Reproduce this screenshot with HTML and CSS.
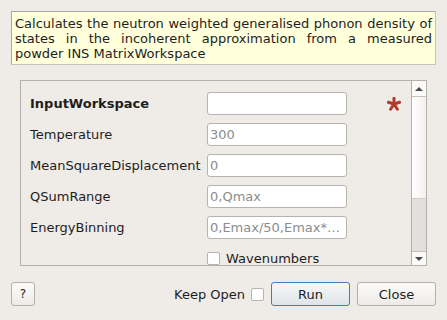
FILE: index.html
```html
<!DOCTYPE html>
<html>
<head>
<meta charset="utf-8">
<link rel="stylesheet" href="styles.css">
</head>
<body>
<div class="dialog">
  <div class="desc">Calculates the neutron weighted generalised phonon density of states in the incoherent approximation from a measured powder INS MatrixWorkspace</div>
  <div class="group">
    <div class="content">
      <div class="grid">
        <div class="label bold">InputWorkspace</div>
        <div class="input"></div>
        <div class="star"><svg width="14" height="14" viewBox="0 0 14 14"><g stroke="#b33a2d" stroke-width="3" stroke-linecap="round"><line x1="7" y1="7" x2="7" y2="1.2"/><line x1="7" y1="7" x2="12.6" y2="5.2"/><line x1="7" y1="7" x2="10.4" y2="12.2"/><line x1="7" y1="7" x2="3.6" y2="12.2"/><line x1="7" y1="7" x2="1.4" y2="5.2"/></g></svg></div>

        <div class="label">Temperature</div>
        <div class="input"><span class="ph">300</span></div>
        <div></div>

        <div class="label">MeanSquareDisplacement</div>
        <div class="input"><span class="ph">0</span></div>
        <div></div>

        <div class="label">QSumRange</div>
        <div class="input"><span class="ph">0,Qmax</span></div>
        <div></div>

        <div class="label">EnergyBinning</div>
        <div class="input"><span class="ph">0,Emax/50,Emax*…</span></div>
        <div></div>

        <div></div>
        <div class="check-row"><span class="cb"></span><span>Wavenumbers</span></div>
        <div></div>
      </div>
    </div>
    <div class="scrollbar">
      <div class="sb-btn sb-up"><span class="tri-up"></span></div>
      <div class="sb-thumb"></div>
      <div class="sb-track"></div>
      <div class="sb-btn sb-down"><span class="tri-down"></span></div>
    </div>
  </div>
  <div class="footer">
    <div class="btn help">?</div>
    <div class="spacer"></div>
    <div class="keep">Keep Open</div>
    <span class="cb keep-cb"></span>
    <div class="btn run">Run</div>
    <div class="btn close">Close</div>
  </div>
</div>
</body>
</html>
```
FILE: styles.css
```css
html, body {
  margin: 0;
  padding: 0;
  background: #efebe7;
}
body {
  font-family: "DejaVu Sans", sans-serif;
  font-size: 13px;
  color: #1e1e1e;
  width: 447px;
  height: 320px;
  overflow: hidden;
}
.dialog {
  padding: 11px 11px 0 11px;
  display: flex;
  flex-direction: column;
}
.desc {
  background: #ffffdc;
  border: 1px solid #c4c2bc;
  border-left-color: #a9a7a2;
  border-top-color: #a9a7a2;
  padding: 4px 3px 3px 3px;
  line-height: 15px;
  text-align: justify;
  height: 45px;
}
.group {
  margin: 15px 9px 0 9px;
  height: 186px;
  border: 1px solid #b3b0ab;
  display: flex;
  box-sizing: border-box;
}
.content {
  flex: 1;
  overflow: hidden;
  padding: 11px 0 0 9px;
}
.grid {
  display: grid;
  grid-template-columns: 177px 140px 40px 14px;
  grid-auto-rows: 23px;
  row-gap: 8px;
}
.grid > .star { grid-column: 4; }
.grid > div:nth-child(3n) { grid-column: 3 / span 2; }
.label {
  display: flex;
  align-items: center;
  white-space: nowrap;
}
.bold { font-weight: bold; }
.input {
  background: #fff;
  border: 1px solid #b7b4af;
  border-radius: 3px;
  box-sizing: border-box;
  display: flex;
  align-items: center;
  padding-left: 2px;
  overflow: hidden;
  white-space: nowrap;
}
.ph { color: #8c8c8c; }
.star {
  display: flex;
  align-items: center;
  justify-content: flex-end;
}
.check-row {
  display: flex;
  align-items: center;
  gap: 6px;
}
.cb {
  display: inline-block;
  width: 13px;
  height: 13px;
  box-sizing: border-box;
  background: #fff;
  border: 1px solid #b7b4af;
  border-radius: 2px;
}
.scrollbar {
  width: 14px;
  border-left: 1px solid #b3b0ab;
  display: flex;
  flex-direction: column;
}
.sb-btn {
  height: 15px;
  background: #fafaf9;
  display: flex;
  align-items: center;
  justify-content: center;
  flex: none;
}
.sb-up { border-bottom: 1px solid #c4c2bd; }
.sb-down { border-top: 1px solid #c4c2bd; height: 13px; }
.tri-up {
  width: 0; height: 0;
  border-left: 4px solid transparent;
  border-right: 4px solid transparent;
  border-bottom: 4px solid #4a4a4a;
}
.tri-down {
  width: 0; height: 0;
  border-left: 4px solid transparent;
  border-right: 4px solid transparent;
  border-top: 4px solid #4a4a4a;
}
.sb-thumb {
  height: 101px;
  flex: none;
  background: linear-gradient(to right, #ffffff, #f1f0ee);
  border-bottom: 1px solid #cfcdc9;
}
.sb-track {
  flex: 1;
  background: #e2e0dd;
}
.footer {
  display: flex;
  align-items: center;
  margin-top: 16px;
  height: 24px;
}
.spacer { flex: 1; }
.btn {
  height: 24px;
  box-sizing: border-box;
  border: 1px solid #b3b0ab;
  border-radius: 3px;
  background: linear-gradient(#fcfbfa, #ecebe8);
  display: flex;
  align-items: center;
  justify-content: center;
}
.help { width: 24px; font-size: 12px; }
.keep { margin-right: 6px; }
.keep-cb { margin-right: 7px; }
.run {
  width: 79px;
  border-color: #3f7fb4;
  background: linear-gradient(#f6f7f8, #dfe4e8);
  margin-right: 7px;
}
.close { width: 79px; }
```
